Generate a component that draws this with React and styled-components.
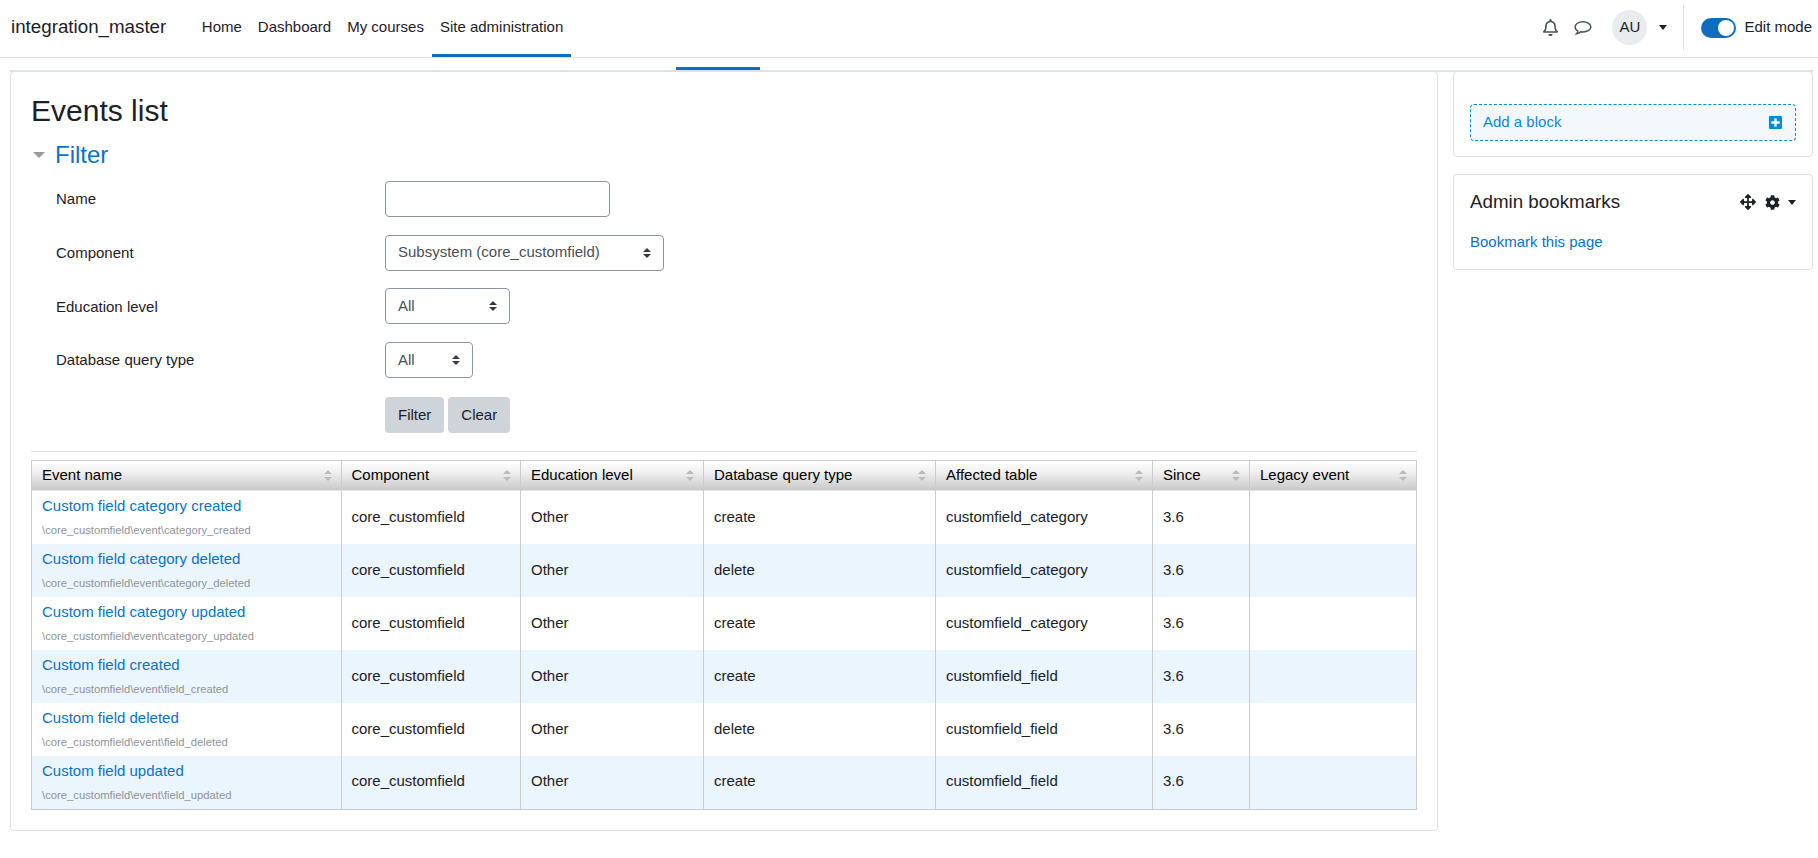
import React from "react";
import styled, { createGlobalStyle } from "styled-components";
import { FaRegBell, FaArrowsAlt, FaCog, FaPlusSquare } from "react-icons/fa";

const GlobalStyle = createGlobalStyle`
  html, body {
    margin: 0;
    padding: 0;
    background: #fff;
  }
  body {
    font-family: "Liberation Sans", Arial, sans-serif;
    font-size: 15px;
    line-height: 22.5px;
    color: #1d2125;
  }
  * {
    box-sizing: border-box;
  }
`;

const Header = styled.header`
  display: flex;
  align-items: center;
  height: 58px;
  padding: 0 6px 0 11px;
  border-bottom: 1px solid #dee2e6;
`;

const Brand = styled.a`
  font-size: 18.75px;
  margin: 0 27.5px 2px 0;
  color: #1d2125;
`;

const NavList = styled.nav`
  display: flex;
  align-self: stretch;
`;

const NavItem = styled.a`
  display: flex;
  align-items: center;
  padding: 0 8px;
  border-bottom: 3px solid ${(p) => (p.$active ? "#0f6cbf" : "transparent")};
  color: #1d2125;
`;

const UserMenu = styled.div`
  display: flex;
  align-items: center;
  margin-left: auto;
  padding-bottom: 2px;
  align-self: stretch;
`;

const IconSlot = styled.span`
  display: flex;
  font-size: 17px;
  color: #495057;
  margin-right: ${(p) => p.$gap}px;
`;

const Avatar = styled.span`
  display: flex;
  align-items: center;
  justify-content: center;
  width: 35px;
  height: 35px;
  margin-right: 12px;
  border-radius: 50%;
  background: #e9ecef;
`;

const Caret = styled.span`
  display: block;
  width: 0;
  height: 0;
  margin-right: ${(p) => p.$gap || 0}px;
  border-left: 4.5px solid transparent;
  border-right: 4.5px solid transparent;
  border-top: 5px solid #1d2125;
`;

const Divider = styled.span`
  align-self: center;
  width: 1px;
  height: 45px;
  margin-right: 17px;
  background: #dee2e6;
`;

const Toggle = styled.span`
  display: flex;
  justify-content: flex-end;
  width: 35px;
  height: 20px;
  padding: 2px;
  margin-right: 8px;
  border-radius: 10px;
  background: #0f6cbf;
`;

const Knob = styled.span`
  width: 16px;
  height: 16px;
  border-radius: 50%;
  background: #fff;
`;

const SecondaryNav = styled.div`
  position: relative;
  z-index: 1;
  display: flex;
  align-items: flex-end;
  height: 14px;
  margin: 0 5px 0 10px;
  border-bottom: 2px solid #dee2e6;
`;

const ActiveTab = styled.span`
  width: 84px;
  height: 3px;
  margin-left: 666px;
  background: #0f6cbf;
`;

const Columns = styled.div`
  display: flex;
  align-items: flex-start;
  gap: 15px;
  margin-top: -1px;
  padding: 0 5px 28px 10px;
`;

const MainCard = styled.main`
  width: 1428px;
  padding: 20px;
  border: 1px solid #dee2e6;
  border-radius: 4px;
`;

const Title = styled.h1`
  margin: 1px 0 12px;
  font-size: 30px;
  font-weight: 400;
  line-height: 36px;
`;

const FilterHead = styled.div`
  display: flex;
  align-items: center;
  gap: 10px;
  margin: 0 0 12px 2px;
`;

const FilterArrow = styled.span`
  width: 0;
  height: 0;
  border-left: 6px solid transparent;
  border-right: 6px solid transparent;
  border-top: 6px solid #999;
`;

const FilterTitle = styled.h3`
  margin: 0;
  font-size: 24px;
  font-weight: 400;
  line-height: 28px;
  color: #0c72c4;
`;

const FormRow = styled.div`
  display: grid;
  grid-template-columns: 329px auto;
  justify-content: start;
  align-items: center;
  height: 36px;
  margin: 0 0 17.67px 25px;
`;

const Label = styled.label`
  margin-top: 1px;
`;

const TextInput = styled.input`
  width: 225px;
  height: 36px;
  border: 1px solid #8f959e;
  border-radius: 4px;
  background: #fff;
`;

const Select = styled.select`
  appearance: none;
  width: ${(p) => p.$w}px;
  height: 36px;
  padding: 0 12px;
  border: 1px solid #8f959e;
  border-radius: 4px;
  font: inherit;
  color: #495057;
  background: #fff
    url("data:image/svg+xml,%3csvg xmlns='http://www.w3.org/2000/svg' viewBox='0 0 4 5'%3e%3cpath fill='%23343a40' d='M2 0L0 2h4zm0 5L0 3h4z'/%3e%3c/svg%3e")
    no-repeat right 12px center / 8px 10px;
`;

const ButtonRow = styled(FormRow)`
  margin-top: 19px;
  margin-bottom: 18px;
`;

const Buttons = styled.div`
  display: flex;
  gap: 4px;
`;

const Button = styled.button`
  height: 36px;
  padding: 0 13px;
  border: none;
  border-radius: 4px;
  font: inherit;
  color: #1d2125;
  background: #ced4da;
`;

const Rule = styled.hr`
  margin: 0 0 8px;
  border: none;
  border-top: 1px solid #dee2e6;
`;

const Table = styled.table`
  width: 1385px;
  table-layout: fixed;
  border-collapse: collapse;
  border: 1px solid #ccc;
`;

const Th = styled.th`
  width: ${(p) => p.$w}px;
  height: 31px;
  padding: 0 10px;
  border-left: 1px solid #ccc;
  font-weight: 400;
  text-align: left;
  color: #000;
  background: linear-gradient(to bottom, #fff 0%, #f2f2f2 35%, #c8c8c8 100%);
`;

const HeadInner = styled.div`
  display: flex;
  align-items: center;
  justify-content: space-between;
  margin-right: -1px;
  margin-top: -2px;
`;

const Tr = styled.tr`
  background: ${(p) => (p.$odd ? "#eaf5fe" : "#fff")};
`;

const Td = styled.td`
  height: 53px;
  padding: 0 10px 2px;
  border-left: 1px solid #ccc;
  vertical-align: middle;
`;

const NameTd = styled(Td)`
  padding-bottom: 0;
`;

const EventLink = styled.a`
  display: block;
  line-height: 22px;
  margin-top: -2px;
  color: #0c72c4;
`;

const EventPath = styled.span`
  display: block;
  margin-top: 6px;
  font-size: 11.25px;
  line-height: 15px;
  color: #8f9499;
`;

const Side = styled.aside`
  display: flex;
  flex-direction: column;
  gap: 17px;
  width: 360px;
`;

const SideCard = styled.section`
  padding: ${(p) => p.$pad};
  border: 1px solid #dee2e6;
  border-radius: 4px;
`;

const AddBlock = styled.a`
  display: flex;
  align-items: center;
  justify-content: space-between;
  height: 37px;
  padding: 0 12px;
  border: 1px dashed #0a8ad0;
  border-radius: 4px;
  font-size: 15px;
  color: #0a8ad0;
  background: #f3f8fc;
`;

const BlockHead = styled.div`
  display: flex;
  align-items: center;
  justify-content: space-between;
  margin-bottom: 17px;
`;

const BlockTitle = styled.h5`
  margin: 0;
  font-size: 18.75px;
  font-weight: 400;
  line-height: 22.5px;
`;

const BlockTools = styled.div`
  display: flex;
  align-items: center;
  color: #1d2125;
`;

const ToolIcon = styled.span`
  display: flex;
  font-size: ${(p) => p.$size}px;
  margin-right: ${(p) => p.$gap}px;
`;

const BookmarkLink = styled.a`
  display: block;
  color: #0c72c4;
`;

const SortIcon = () => (
  <svg width="8" height="11" viewBox="0 0 8 11">
    <path d="M4 0L8 4H0z M4 11L0 7h8z" fill="#bbb" />
  </svg>
);

const CommentIcon = () => (
  <svg width="18" height="18" viewBox="0 0 16 16" fill="none" stroke="currentColor" strokeWidth="1.3">
    <path d="M8 2.4C4 2.4 1 4.5 1 7c0 1.6 1 2.9 2.5 3.7-.2 1-.7 1.8-1.3 2.5 1.4-.2 2.8-.9 3.8-1.9.6.1 1.3.2 2 .2 4 0 7-2.1 7-4.5S12 2.4 8 2.4z" />
  </svg>
);

const columns = [
  { name: "Event name", w: 309.5 },
  { name: "Component", w: 179.5 },
  { name: "Education level", w: 183 },
  { name: "Database query type", w: 232 },
  { name: "Affected table", w: 217 },
  { name: "Since", w: 97 },
  { name: "Legacy event", w: 167 },
];

const events = [
  { name: "Custom field category created", path: "\\core_customfield\\event\\category_created", query: "create", table: "customfield_category" },
  { name: "Custom field category deleted", path: "\\core_customfield\\event\\category_deleted", query: "delete", table: "customfield_category" },
  { name: "Custom field category updated", path: "\\core_customfield\\event\\category_updated", query: "create", table: "customfield_category" },
  { name: "Custom field created", path: "\\core_customfield\\event\\field_created", query: "create", table: "customfield_field" },
  { name: "Custom field deleted", path: "\\core_customfield\\event\\field_deleted", query: "delete", table: "customfield_field" },
  { name: "Custom field updated", path: "\\core_customfield\\event\\field_updated", query: "create", table: "customfield_field" },
];

const App = () => {
  return (
    <div>
      <GlobalStyle />
      <Header>
        <Brand>integration_master</Brand>
        <NavList>
          <NavItem>Home</NavItem>
          <NavItem>Dashboard</NavItem>
          <NavItem>My courses</NavItem>
          <NavItem $active>Site administration</NavItem>
        </NavList>
        <UserMenu>
          <IconSlot $gap={15}>
            <FaRegBell />
          </IconSlot>
          <IconSlot $gap={20}>
            <CommentIcon />
          </IconSlot>
          <Avatar>AU</Avatar>
          <Caret $gap={16} />
          <Divider />
          <Toggle>
            <Knob />
          </Toggle>
          <span>Edit mode</span>
        </UserMenu>
      </Header>

      <SecondaryNav>
        <ActiveTab />
      </SecondaryNav>

      <Columns>
        <MainCard>
          <Title>Events list</Title>
          <FilterHead>
            <FilterArrow />
            <FilterTitle>Filter</FilterTitle>
          </FilterHead>

          <FormRow>
            <Label>Name</Label>
            <TextInput />
          </FormRow>
          <FormRow>
            <Label>Component</Label>
            <Select $w={279} defaultValue="core">
              <option value="core">Subsystem (core_customfield)</option>
            </Select>
          </FormRow>
          <FormRow>
            <Label>Education level</Label>
            <Select $w={125}>
              <option>All</option>
            </Select>
          </FormRow>
          <FormRow>
            <Label>Database query type</Label>
            <Select $w={88}>
              <option>All</option>
            </Select>
          </FormRow>
          <ButtonRow>
            <span />
            <Buttons>
              <Button>Filter</Button>
              <Button>Clear</Button>
            </Buttons>
          </ButtonRow>

          <Rule />

          <Table>
            <thead>
              <tr>
                {columns.map((col) => (
                  <Th key={col.name} $w={col.w}>
                    <HeadInner>
                      {col.name}
                      <SortIcon />
                    </HeadInner>
                  </Th>
                ))}
              </tr>
            </thead>
            <tbody>
              {events.map((ev, i) => (
                <Tr key={ev.path} $odd={i % 2 === 1}>
                  <NameTd>
                    <EventLink>{ev.name}</EventLink>
                    <EventPath>{ev.path}</EventPath>
                  </NameTd>
                  <Td>core_customfield</Td>
                  <Td>Other</Td>
                  <Td>{ev.query}</Td>
                  <Td>{ev.table}</Td>
                  <Td>3.6</Td>
                  <Td />
                </Tr>
              ))}
            </tbody>
          </Table>
        </MainCard>

        <Side>
          <SideCard $pad="32px 16px 15px 16px">
            <AddBlock>
              Add a block
              <FaPlusSquare />
            </AddBlock>
          </SideCard>
          <SideCard $pad="16px 16px 16px 16px">
            <BlockHead>
              <BlockTitle>Admin bookmarks</BlockTitle>
              <BlockTools>
                <ToolIcon $size={16} $gap={9}>
                  <FaArrowsAlt />
                </ToolIcon>
                <ToolIcon $size={15} $gap={8}>
                  <FaCog />
                </ToolIcon>
                <Caret />
              </BlockTools>
            </BlockHead>
            <BookmarkLink>Bookmark this page</BookmarkLink>
          </SideCard>
        </Side>
      </Columns>
    </div>
  );
};

export default App;
